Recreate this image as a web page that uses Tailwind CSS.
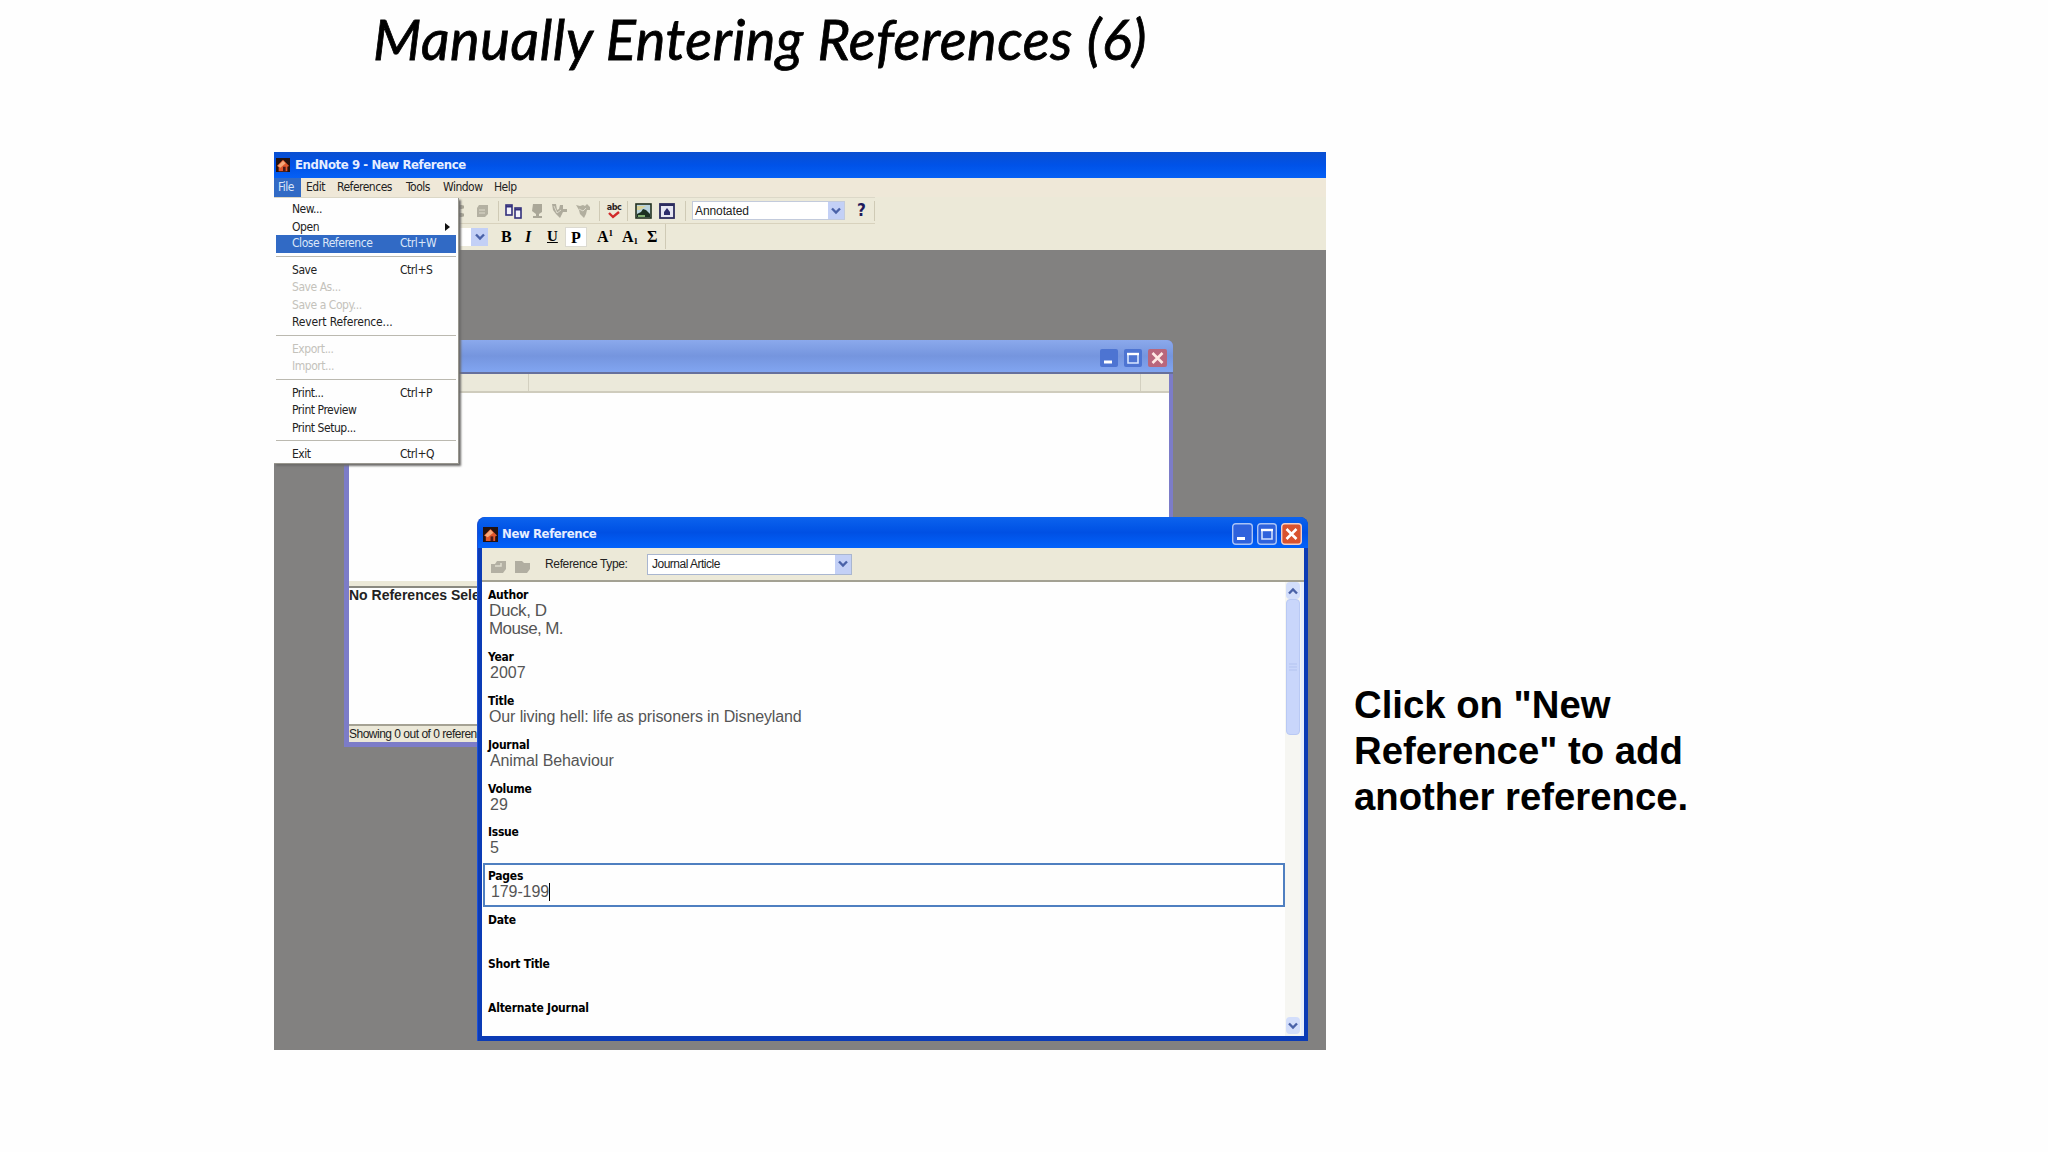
<!DOCTYPE html>
<html lang="en">

<head>
  <meta charset="UTF-8">
  <meta name="viewport" content="width=device-width, initial-scale=1.0">
  <title>Manually Entering References (6)</title>
  <script src="https://cdn.jsdelivr.net/npm/@tailwindcss/browser@4"></script>
</head>

<body class="relative w-[2048px] h-[1152px] overflow-hidden bg-[#fefefe] text-black font-['Liberation_Sans',sans-serif]">

  <!-- shared icons -->
  <svg class="hidden">
    <symbol id="house" viewBox="0 0 16 16">
      <rect width="16" height="16" fill="#24120f" />
      <path d="M1 9L8 2l7 7-2 1v5H3v-5z" fill="#e0572c" />
      <path d="M2 9l6-6 3 3-6 5z" fill="#f5a878" />
      <path d="M8 10h3v5H8z" fill="#4a1a1a" />
    </symbol>
    <symbol id="chevron" viewBox="0 0 10 8">
      <path d="M1 1.5l4 4 4-4" fill="none" stroke="#4a62a8" stroke-width="2.4" />
    </symbol>
  </svg>

  <h1 class="absolute left-[373px] top-[5px] h-[68px] leading-[68px] whitespace-nowrap italic text-[56px] tracking-[0.55px] [-webkit-text-stroke:0.8px_black] font-['Lato',sans-serif]">Manually Entering References (6)</h1>

  <!-- EndNote main window -->
  <main class="absolute left-[274px] top-[152px] w-[1052px] h-[898px] bg-[#828180] overflow-hidden font-['DejaVu_Sans_Condensed','DejaVu_Sans',sans-serif] text-[12px]">
    <div class="flex items-center h-[26px] pl-[2px] gap-[5px] bg-linear-to-b from-[#0a4fd0] via-[#0052e8] to-[#0560f5] text-[#e6eeff] font-bold">
      <svg class="w-[14px] h-[14px]"><use href="#house" /></svg>
      <span class="text-[13px] tracking-[-0.4px] whitespace-nowrap">EndNote 9 - New Reference</span>
    </div>

    <div class="flex h-[19px] leading-[18px] bg-[#efe8d8] whitespace-nowrap tracking-[-0.5px] text-[#222]">
      <span class="w-[27px] pl-1 bg-[#316ac5] text-[#dbe6f8]">File</span>
      <span class="w-[31px] pl-[5px]">Edit</span>
      <span class="w-[68px] pl-[5px]">References</span>
      <span class="w-[38px] pl-[6px]">Tools</span>
      <span class="w-[50px] pl-[5px]">Window</span>
      <span class="pl-[6px]">Help</span>
    </div>

    <div class="h-[53px] bg-[#ece9d8]">
      <div class="flex items-center w-[601px] h-[27px] pl-[181px] border-y border-[#d8d2bd] border-t-[#dcd8c8]">
        <svg class="w-[12px] h-[16px]" viewBox="0 0 12 16"><path d="M6 2v4M6 10v4M3 4h6M3 12h6" stroke="#aaa798" stroke-width="3" /></svg>
        <svg class="ml-[9px] w-[14px] h-[16px]" viewBox="0 0 14 16"><path d="M3 2h9v9l-3 3H1V5z" fill="#b4b1a2" /><path d="M3 7h6M3 10h6" stroke="#dddacb" /></svg>
        <span class="ml-[8px] mr-[6px] w-px h-5 bg-[#cfcab5]"></span>
        <svg class="w-[17px] h-[16px]" viewBox="0 0 17 16"><rect x="1" y="2" width="6" height="10" fill="#f2f2fa" stroke="#33307c" stroke-width="1.6" /><rect x="10" y="5" width="6" height="10" fill="#f2f2fa" stroke="#33307c" stroke-width="1.6" /><path d="M1 3.5h6M10 6.5h6" stroke="#33307c" stroke-width="2" /></svg>
        <svg class="ml-[8px] w-[14px] h-[16px]" viewBox="0 0 14 16"><path d="M3 1h9v8l-3 2v2h3v2H3v-2h3v-2L2 8z" fill="#aaa798" /></svg>
        <svg class="ml-[7px] w-[16px] h-[16px]" viewBox="0 0 16 16"><path d="M1 1h4l1 6 2-1 1-4h3v4h4v3h-4l-3 6-4-4-3-4z" fill="#aeab9c" /><path d="M3 3l3 7 4-3" stroke="#dddacb" fill="none" /></svg>
        <svg class="ml-[8px] w-[16px] h-[16px]" viewBox="0 0 16 16"><path d="M1 2l4 1 3-1 2 1 2-2 3 3v3h-3l-1 4-2 4-4-4-1-4z" fill="#b2af9f" /><path d="M4 6l4 2 3-3" stroke="#dddacb" fill="none" /></svg>
        <span class="ml-[8px] mr-[6px] w-px h-5 bg-[#cfcab5]"></span>
        <span class="flex flex-col items-center w-[16px] text-[9px] leading-[8px] font-bold tracking-[-0.5px] text-[#2c2222]">abc
          <svg class="w-[12px] h-[8px]" viewBox="0 0 12 8"><path d="M1 2l4 4 6-5" fill="none" stroke="#d12a2a" stroke-width="2.4" /></svg>
        </span>
        <span class="ml-[5px] mr-[7px] w-px h-5 bg-[#cfcab5]"></span>
        <svg class="w-[17px] h-[16px]" viewBox="0 0 17 16"><rect x="1" y="1" width="15" height="14" fill="#b9d3dc" stroke="#22301f" stroke-width="1.6" /><path d="M2 11l4-2 2-3 3 1 4 4v3H2z" fill="#1b3022" /><path d="M2 3h9l-6 4H2z" fill="#d9d39b" /><path d="M3 13h7" stroke="#7fae70" stroke-width="2" /></svg>
        <svg class="ml-[7px] w-[16px] h-[16px]" viewBox="0 0 16 16"><rect x="1" y="1" width="14" height="14" fill="#e6e6f2" stroke="#2c2c5e" stroke-width="1.8" /><path d="M1 2h14" stroke="#2c2c5e" stroke-width="2" /><path d="M8 5l3 4v3H5V9z" fill="#2c2c6c" /></svg>
        <span class="ml-[10px] mr-[6px] w-px h-5 bg-[#cfcab5]"></span>
        <div class="flex items-center w-[153px] h-[19px] bg-white border border-[#c3cbdc]">
          <span class="flex-1 pl-[2px] tracking-[-0.1px] text-[#222] font-['Liberation_Sans',sans-serif]">Annotated</span>
          <span class="flex items-center justify-center w-[16px] h-[17px] bg-[#c3d0f6]"><svg class="w-[10px] h-[8px]"><use href="#chevron" /></svg></span>
        </div>
        <span class="ml-[12px] text-[17px] font-bold text-[#1f1a5c]">?</span>
        <span class="ml-auto w-px h-5 bg-[#cfcab5]"></span>
      </div>
      <div class="flex items-center w-[392px] h-[25px] pl-[181px] border-r border-[#cfcab5] font-['Liberation_Serif',serif] font-bold text-[16px] leading-none">
        <div class="flex justify-end w-[33px] h-[18px] bg-white">
          <span class="flex items-center justify-center w-[17px] h-[18px] bg-[#c3d0f6]"><svg class="w-[10px] h-[8px]"><use href="#chevron" /></svg></span>
        </div>
        <span class="ml-[13px] w-[24px]">B</span>
        <span class="w-[22px] italic">I</span>
        <span class="w-[18px] text-[15px] underline underline-offset-1">U</span>
        <span class="w-[22px] h-[20px] leading-[20px] text-center bg-white border border-[#dcdad0]">P</span>
        <span class="ml-[10px] w-[25px] whitespace-nowrap">A<sup class="text-[9px] -top-[6px]">1</sup></span>
        <span class="w-[25px] whitespace-nowrap">A<sub class="text-[9px]">1</sub></span>
        <span>Σ</span>
      </div>
    </div>

    <!-- library window, inactive -->
    <section class="absolute left-[70px] top-[188px] w-[829px] h-[407px] flex flex-col bg-[#7c7cc8] rounded-t-md pr-[4px] pl-[5px] pb-[5px]">
      <div class="flex items-center justify-end -ml-[5px] -mr-[4px] h-[34px] pt-[3px] pr-[6px] gap-[6px] rounded-t-md bg-linear-to-b from-[#8ba9ec] via-[#7595de] to-[#81a5f1] border-b-2 border-[#66709c]">
        <svg class="w-[18px] h-[18px]" viewBox="0 0 18 18"><rect width="18" height="18" rx="2" fill="#4d74d2" /><path d="M4 13h8" stroke="#fff" stroke-width="3" /></svg>
        <svg class="w-[18px] h-[18px]" viewBox="0 0 18 18"><rect width="18" height="18" rx="2" fill="#4d74d2" /><path d="M4 5h10v9H4z" fill="none" stroke="#d8e6ff" stroke-width="1.6" /><path d="M3 5h12" stroke="#fff" stroke-width="2.4" /></svg>
        <svg class="w-[19px] h-[18px]" viewBox="0 0 19 18"><rect width="19" height="18" rx="2" fill="#b9667c" /><path d="M4.500 4l10 10M14.500 4l-10 10" stroke="#ffe9e4" stroke-width="2.6" /></svg>
      </div>
      <div class="flex h-[19px] bg-[#ebe9da] border-b-2 border-[#cfccbd]">
        <span class="w-[180px] border-r border-[#d3d0c0]"></span>
        <span class="w-[612px] border-r border-[#d3d0c0]"></span>
      </div>
      <div class="h-[188px] bg-[#fefefe]"></div>
      <div class="h-[7px] bg-[#ece9d8] border-b-2 border-[#8a897f]"></div>
      <div class="flex-1 bg-[#fefefe]">
        <p class="w-[128px] overflow-hidden font-['Liberation_Sans',sans-serif] font-bold text-[14px] leading-[15px] whitespace-nowrap text-[#222]">No References Selected</p>
      </div>
      <div class="h-[18px] bg-[#ebe8d8] border-t-2 border-[#a5a294]">
        <p class="w-[128px] overflow-hidden text-[12px] leading-[16px] tracking-[-0.5px] whitespace-nowrap text-[#222] font-['Liberation_Sans',sans-serif]">Showing 0 out of 0 references.</p>
      </div>
    </section>

    <!-- New Reference window -->
    <section class="absolute left-[203px] top-[365px] w-[831px] h-[524px] flex flex-col bg-[#0b3bb5] border-l border-[#1c50d8] rounded-t-lg px-[4px] pb-[5px]">
      <div class="flex items-center -mx-[4px] h-[31px] pt-[3px] pl-[5px] pr-[6px] gap-[4px] rounded-t-lg bg-linear-to-b from-[#0d63ee] via-[#0050e4] to-[#0262fb] text-[#e6eeff]">
        <svg class="w-[15px] h-[15px]"><use href="#house" /></svg>
        <span class="flex-1 font-bold text-[13px] tracking-[-0.4px]">New Reference</span>
        <svg class="w-[21px] h-[22px]" viewBox="0 0 21 22"><rect x=".7" y=".7" width="19.600" height="20.600" rx="3" fill="#2f62dc" stroke="#a9c3f6" stroke-width="1.400" /><path d="M5 15.500h8" stroke="#fff" stroke-width="3" /></svg>
        <svg class="w-[20px] h-[22px]" viewBox="0 0 20 22"><rect x=".7" y=".7" width="18.600" height="20.600" rx="3" fill="#2f62dc" stroke="#a9c3f6" stroke-width="1.400" /><path d="M5 7h10v9H5z" fill="none" stroke="#cfe0ff" stroke-width="1.600" /><path d="M4 7h12" stroke="#fff" stroke-width="2.400" /></svg>
        <svg class="w-[21px] h-[22px]" viewBox="0 0 21 22"><rect x=".7" y=".7" width="19.600" height="20.600" rx="3" fill="#d9532f" stroke="#f3cfc6" stroke-width="1.400" /><path d="M5.500 6l10 10M15.500 6l-10 10" stroke="#fff" stroke-width="2.600" /></svg>
      </div>
      <div class="flex items-center h-[34px] pl-[8px] bg-[#ece9d8] border-b-2 border-[#a3a193] font-['Liberation_Sans',sans-serif] whitespace-nowrap text-[#222]">
        <svg class="mt-1 w-[17px] h-[15px]" viewBox="0 0 17 15"><path d="M1 5h4l2-3h9v8l-3 4H1z" fill="#b3b0a3" /><path d="M5 7h6V4" fill="none" stroke="#e0ddcf" stroke-width="1.500" /></svg>
        <svg class="mt-1 ml-[7px] w-[17px] h-[15px]" viewBox="0 0 17 15"><path d="M1 2h7l2 2h6v6l-3 4H1z" fill="#b1aea1" /></svg>
        <span class="ml-[14px] w-[102px] tracking-[-0.35px]">Reference Type:</span>
        <div class="flex items-center w-[205px] h-[21px] bg-white border border-[#a9b6d0]">
          <span class="flex-1 pl-[4px] tracking-[-0.5px]">Journal Article</span>
          <span class="flex items-center justify-center w-[16px] h-[19px] bg-[#c3d0f6]"><svg class="w-[10px] h-[8px]"><use href="#chevron" /></svg></span>
        </div>
      </div>
      <div class="flex flex-1 min-h-0 bg-[#fefefe]">
        <div class="w-[803px] pt-[5px] text-[12px] whitespace-nowrap">
          <div class="h-[62px] pl-[6px]">
            <p class="h-[15px] leading-[17px] font-bold tracking-[-0.25px]">Author</p>
            <p class="h-[18px] leading-[17px] pl-px text-[17px] tracking-[-0.4px] text-[#555] font-['Liberation_Sans',sans-serif]">Duck, D</p>
            <p class="h-[18px] leading-[17px] pl-px text-[17px] tracking-[-0.6px] text-[#555] font-['Liberation_Sans',sans-serif]">Mouse, M.</p>
          </div>
          <div class="h-[43.850px] pl-[6px]">
            <p class="h-[15px] leading-[17px] font-bold tracking-[-0.25px]">Year</p>
            <p class="leading-[17px] pl-[2px] text-[16px] text-[#555] font-['Liberation_Sans',sans-serif]">2007</p>
          </div>
          <div class="h-[43.850px] pl-[6px]">
            <p class="h-[15px] leading-[17px] font-bold tracking-[-0.25px]">Title</p>
            <p class="leading-[17px] pl-px text-[16px] tracking-[-0.12px] text-[#555] font-['Liberation_Sans',sans-serif]">Our living hell: life as prisoners in Disneyland</p>
          </div>
          <div class="h-[43.850px] pl-[6px]">
            <p class="h-[15px] leading-[17px] font-bold tracking-[-0.25px]">Journal</p>
            <p class="leading-[17px] pl-[2px] text-[16px] tracking-[-0.1px] text-[#555] font-['Liberation_Sans',sans-serif]">Animal Behaviour</p>
          </div>
          <div class="h-[43.850px] pl-[6px]">
            <p class="h-[15px] leading-[17px] font-bold tracking-[-0.25px]">Volume</p>
            <p class="leading-[17px] pl-[2px] text-[16px] text-[#555] font-['Liberation_Sans',sans-serif]">29</p>
          </div>
          <div class="h-[39px] pl-[6px]">
            <p class="h-[15px] leading-[17px] font-bold tracking-[-0.25px]">Issue</p>
            <p class="leading-[17px] pl-[2px] text-[16px] text-[#555] font-['Liberation_Sans',sans-serif]">5</p>
          </div>
          <div class="h-[44px] ml-px pl-[3px] pt-[3px] border-2 border-[#4f7fc0]">
            <p class="h-[15px] leading-[17px] font-bold tracking-[-0.25px]">Pages</p>
            <p class="flex leading-[17px] pl-[3px] text-[16px] tracking-[-0.1px] text-[#555] font-['Liberation_Sans',sans-serif]">179-199<span class="w-px h-[18px] bg-black"></span></p>
          </div>
          <p class="h-[43.850px] pt-[5px] pl-[6px] leading-[17px] font-bold tracking-[-0.25px]">Date</p>
          <p class="h-[43.850px] pt-[5px] pl-[6px] leading-[17px] font-bold tracking-[-0.25px]">Short Title</p>
          <p class="pt-[5px] pl-[6px] leading-[17px] font-bold tracking-[-0.2px]">Alternate Journal</p>
        </div>
        <!-- scrollbar -->
        <div class="flex flex-col w-[16px] bg-[#f6f6f2]">
          <span class="flex items-center justify-center h-[17px] mx-px rounded-sm bg-[#d3defb]"><svg class="w-[10px] h-[8px] rotate-180"><use href="#chevron" /></svg></span>
          <span class="flex items-center justify-center h-[136px] mx-px rounded-sm bg-[#c9d6fb] border border-[#b9c9f4]"><svg class="w-[8px] h-[8px]" viewBox="0 0 8 8"><path d="M0 1h8M0 4h8M0 7h8" stroke="#b3c3f0" /></svg></span>
          <span class="flex items-center justify-center h-[17px] mx-px mb-[2px] mt-auto rounded-sm bg-[#d3defb]"><svg class="w-[10px] h-[8px]"><use href="#chevron" /></svg></span>
        </div>
        <div class="flex-1 bg-[#e8f0fd]"></div>
      </div>
    </section>

    <!-- File menu -->
    <ul class="absolute left-0 top-[46px] w-[185px] h-[266px] pt-[3px] px-[2px] bg-[#fefefe] border-r border-b border-[#98968e] shadow-[2px_2px_2px_#6d6c6a] leading-[16px] whitespace-nowrap tracking-[-0.45px] text-[#222]">
      <li class="h-[17px] pl-4">New...</li>
      <li class="flex items-center h-[17px] pl-4">Open<svg class="ml-auto mr-[6px] w-[5px] h-[8px]" viewBox="0 0 5 8"><path d="M0 0l5 4-5 4z" fill="#111" /></svg></li>
      <li class="flex h-[17.500px] pl-4 bg-[#316ac5] text-[#dbe6f8]"><span class="w-[108px]">Close Reference</span>Ctrl+W</li>
      <li class="h-[9px] pt-[3px]"><hr class="border-[#bbb9b0]"></li>
      <li class="flex h-[17.500px] pl-4"><span class="w-[108px]">Save</span>Ctrl+S</li>
      <li class="h-[17.500px] pl-4 text-[#c4c2bb]">Save As...</li>
      <li class="h-[17.500px] pl-4 text-[#c4c2bb]">Save a Copy...</li>
      <li class="h-[17.500px] pl-4 tracking-[-0.15px]">Revert Reference...</li>
      <li class="h-[9px] pt-[3px]"><hr class="border-[#bbb9b0]"></li>
      <li class="h-[17.500px] pl-4 text-[#c4c2bb]">Export...</li>
      <li class="h-[17.500px] pl-4 text-[#c4c2bb]">Import...</li>
      <li class="h-[9px] pt-[3px]"><hr class="border-[#bbb9b0]"></li>
      <li class="flex h-[17.500px] pl-4"><span class="w-[108px]">Print...</span>Ctrl+P</li>
      <li class="h-[17.500px] pl-4">Print Preview</li>
      <li class="h-[17.500px] pl-4">Print Setup...</li>
      <li class="h-[9px] pt-[3px]"><hr class="border-[#bbb9b0]"></li>
      <li class="flex h-[17.500px] pl-4"><span class="w-[108px]">Exit</span>Ctrl+Q</li>
    </ul>
  </main>

  <p class="absolute left-[1354px] top-[682px] w-[360px] text-[38.300px] leading-[46.200px] font-bold whitespace-nowrap">Click on "New<br>Reference" to add<br>another reference.</p>

</body>

</html>
